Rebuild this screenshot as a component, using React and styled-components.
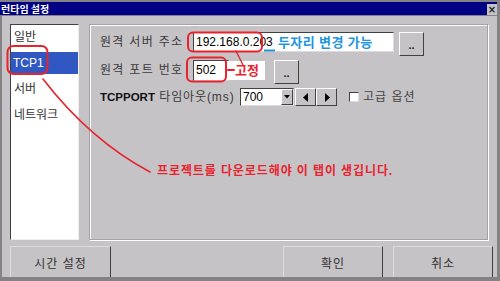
import React from 'react';
import styled, { createGlobalStyle } from 'styled-components';

const Global = createGlobalStyle`
  html, body { margin: 0; padding: 0; background: #848284; }
  body { font-family: "Liberation Sans", "Noto Sans CJK KR", sans-serif; }
  #root { width: 500px; height: 281px; }
`;

const FONT = `"Liberation Sans", "Noto Sans CJK KR", sans-serif`;

const Window = styled.div`
  position: relative;
  width: 500px;
  height: 281px;
  box-sizing: border-box;
  background: #848284;
  padding: 2px 3px 4px 0;
  display: flex;
  flex-direction: column;
  overflow: hidden;
`;

const TitleBar = styled.div`
  height: 13px;
  flex: none;
  background: #000084;
  display: flex;
  align-items: center;
  justify-content: space-between;
  padding-left: 1px;
`;

const TitleText = styled.span`
  color: #fff;
  font: bold 10px/13px "Noto Sans CJK KR", sans-serif;
`;

const CloseBtn = styled.div`
  width: 10px;
  height: 11px;
  margin-top: 1px;
  background: #c6c3c6;
  color: #222;
  font: bold 10px/11px "DejaVu Sans", sans-serif;
  text-align: center;
`;

const Body = styled.div`
  flex: 1;
  margin: 1px 0 0 2px;
  background: #c6c3c6;
  box-sizing: border-box;
  padding: 8px 4px 0 8px;
  display: flex;
  flex-direction: column;
  gap: 6px;
  min-height: 0;
`;

const Main = styled.div`
  display: flex;
  gap: 10px;
  height: 216px;
  margin-right: 5px;
  flex: none;
`;

const ListBox = styled.div`
  width: 69px;
  box-sizing: border-box;
  background: #fff;
  border: 1px solid;
  border-color: #424142 #efefef #efefef #424142;
  padding-top: 1px;
  display: flex;
  flex-direction: column;
  gap: 4px;
`;

const ListItem = styled.div`
  height: 22px;
  padding-left: ${p => (p.$active ? '2px' : '3px')};
  font: 12px/22px ${FONT};
  color: ${p => (p.$active ? '#fff' : '#333')};
  background: ${p => (p.$active ? '#3157c3' : 'transparent')};
`;

const Panel = styled.div`
  flex: 1;
  box-sizing: border-box;
  border: 1px solid #a5a2a5;
  box-shadow: inset 1px 1px 0 #fff, 1px 1px 0 #fff;
  padding: 7px 0 0 10px;
  display: flex;
  flex-direction: column;
  gap: 4px;
`;

const Row = styled.div`
  display: flex;
  align-items: ${p => (p.$center ? 'center' : 'flex-start')};
  height: ${p => p.$h}px;
`;

const Label = styled.div`
  width: ${p => p.$w}px;
  flex: none;
  font: 12px/20px ${FONT};
  color: #3a3a3a;
  letter-spacing: ${p => p.$ls ?? 1.3}px;
  white-space: nowrap;
`;

const Strong = styled.span`
  font: bold 11.5px/18px "Liberation Sans", sans-serif;
  color: #111;
  letter-spacing: 0;
`;

const TextBox = styled.div`
  width: ${p => p.$w}px;
  height: ${p => p.$h}px;
  box-sizing: border-box;
  background: #fff;
  border: 1px solid;
  border-color: #424142 #dedbde #dedbde #424142;
  padding-left: 2px;
  font: 12px/${p => p.$h - 2}px "Liberation Sans", sans-serif;
  color: #000;
  flex: none;
`;

const DotBtn = styled.div`
  width: 25px;
  height: 24px;
  box-sizing: border-box;
  margin-left: ${p => p.$ml}px;
  background: #c6c3c6;
  border: 1px solid;
  border-color: #fff #424142 #424142 #fff;
  font: bold 11px/24px "Liberation Sans", sans-serif;
  text-align: center;
  color: #222;
  flex: none;
`;

const Combo = styled.div`
  width: 54px;
  height: 18px;
  box-sizing: border-box;
  background: #fff;
  border: 1px solid;
  border-color: #424142 #dedbde #dedbde #424142;
  display: flex;
  flex: none;
`;

const ComboValue = styled.div`
  flex: 1;
  padding-left: 2px;
  font: 12px/16px "Liberation Sans", sans-serif;
  color: #000;
`;

const ComboBtn = styled.div`
  width: 12px;
  box-sizing: border-box;
  background: #c6c3c6;
  border: 1px solid;
  border-color: #fff #424142 #424142 #fff;
  display: flex;
  align-items: center;
  justify-content: center;
`;

const SpinGroup = styled.div`
  display: flex;
  margin-left: 1px;
`;

const SpinBtn = styled.div`
  width: 21px;
  height: 18px;
  box-sizing: border-box;
  background: #c6c3c6;
  border: 1px solid;
  border-color: #fff #424142 #424142 #fff;
  display: flex;
  align-items: center;
  justify-content: center;
`;

const Check = styled.div`
  width: 10px;
  height: 10px;
  box-sizing: border-box;
  margin-left: 12px;
  background: #fff;
  border: 1px solid;
  border-color: #424142 #dedbde #dedbde #424142;
  flex: none;
`;

const CheckLabel = styled.span`
  margin-left: 4px;
  font: 12px/18px ${FONT};
  color: #444;
  letter-spacing: 1px;
`;

const Footer = styled.div`
  height: 31px;
  overflow: hidden;
  display: flex;
  justify-content: space-between;
  align-items: flex-start;
`;

const ButtonGroup = styled.div`
  display: flex;
  gap: 10px;
`;

const Button = styled.div`
  width: ${p => p.$w}px;
  height: 36px;
  box-sizing: border-box;
  background: #c6c3c6;
  border: 1px solid;
  border-color: #dedbde #424142 #424142 #dedbde;
  font: 12px/34px ${FONT};
  color: #333;
  text-align: center;
  letter-spacing: 1px;
`;

const Overlay = styled.div`
  position: absolute;
  inset: 0;
  pointer-events: none;
`;

const Note = styled.span`
  position: absolute;
  left: ${p => p.$x}px;
  top: ${p => p.$y}px;
  color: ${p => p.$color};
  font: bold ${p => p.$size}px/16px ${FONT};
  letter-spacing: ${p => p.$ls}px;
  white-space: nowrap;
  background: ${p => p.$bg || 'transparent'};
  padding: ${p => p.$pad || '0'};
`;

const Svg = styled.svg`
  position: absolute;
  left: 0;
  top: 0;
`;

const Tri = ({ dir }) => (
  <svg width="6" height="9" viewBox="0 0 6 9">
    {dir === 'left' ? <path d="M5 0 L0 4.5 L5 9 Z" fill="#000" /> : <path d="M1 0 L6 4.5 L1 9 Z" fill="#000" />}
  </svg>
);

export default function App() {
  const red = '#e8232e';
  return (
    <>
      <Global />
      <Window>
        <TitleBar>
          <TitleText>런타임 설정</TitleText>
          <CloseBtn>×</CloseBtn>
        </TitleBar>
        <Body>
          <Main>
            <ListBox>
              <ListItem>일반</ListItem>
              <ListItem $active>TCP1</ListItem>
              <ListItem>서버</ListItem>
              <ListItem>네트워크</ListItem>
            </ListBox>
            <Panel>
              <Row $h={24}>
                <Label $w={93}>원격 서버 주소</Label>
                <TextBox $w={201} $h={20}>192.168.0.203</TextBox>
                <DotBtn $ml={5}>..</DotBtn>
              </Row>
              <Row $h={24}>
                <Label $w={93}>원격 포트 번호</Label>
                <TextBox $w={36} $h={21}>502</TextBox>
                <DotBtn $ml={45}>..</DotBtn>
              </Row>
              <Row $h={18} $center>
                <Label $w={140} $ls={0.9}>
                  <Strong>TCPPORT</Strong> 타임아웃(ms)
                </Label>
                <Combo>
                  <ComboValue>700</ComboValue>
                  <ComboBtn>
                    <svg width="6" height="4" viewBox="0 0 6 4">
                      <path d="M0 0 H6 L3 3.5 Z" fill="#000" />
                    </svg>
                  </ComboBtn>
                </Combo>
                <SpinGroup>
                  <SpinBtn><Tri dir="left" /></SpinBtn>
                  <SpinBtn><Tri dir="right" /></SpinBtn>
                </SpinGroup>
                <Check />
                <CheckLabel>고급 옵션</CheckLabel>
              </Row>
            </Panel>
          </Main>
          <Footer>
            <Button $w={101}>시간 설정</Button>
            <ButtonGroup>
              <Button $w={100}>확인</Button>
              <Button $w={100}>취소</Button>
            </ButtonGroup>
          </Footer>
        </Body>
        <Overlay>
          <Note $x={278} $y={35} $color="#1e96dc" $size={13} $ls={0.4}>두자리 변경 가능</Note>
          <Note $x={228} $y={61} $color={red} $size={13} $ls={0} $bg="#fff" $pad="2px 6px 1px 7px">고정</Note>
          <Note $x={157} $y={163} $color={red} $size={12} $ls={0.9}>프로젝트를 다운로드해야 이 탭이 생깁니다.</Note>
          <Svg width="500" height="281" viewBox="0 0 500 281">
            <g fill="none" stroke={red} strokeWidth="2" strokeLinecap="round">
              <rect x="7.5" y="46" width="40" height="28" rx="6" />
              <path d="M43 79 Q90 140 150 172" strokeWidth="1.6" />
              <rect x="188" y="32.5" width="74" height="19" rx="5" />
              <path d="M236 51 L243 65" strokeWidth="1.4" />
              <rect x="187" y="57.5" width="39" height="24" rx="5" />
              <path d="M228 70 L234 70" />
            </g>
            <path d="M264 50.5 H275" stroke="#1e96dc" strokeWidth="2" />
          </Svg>
        </Overlay>
      </Window>
    </>
  );
}
